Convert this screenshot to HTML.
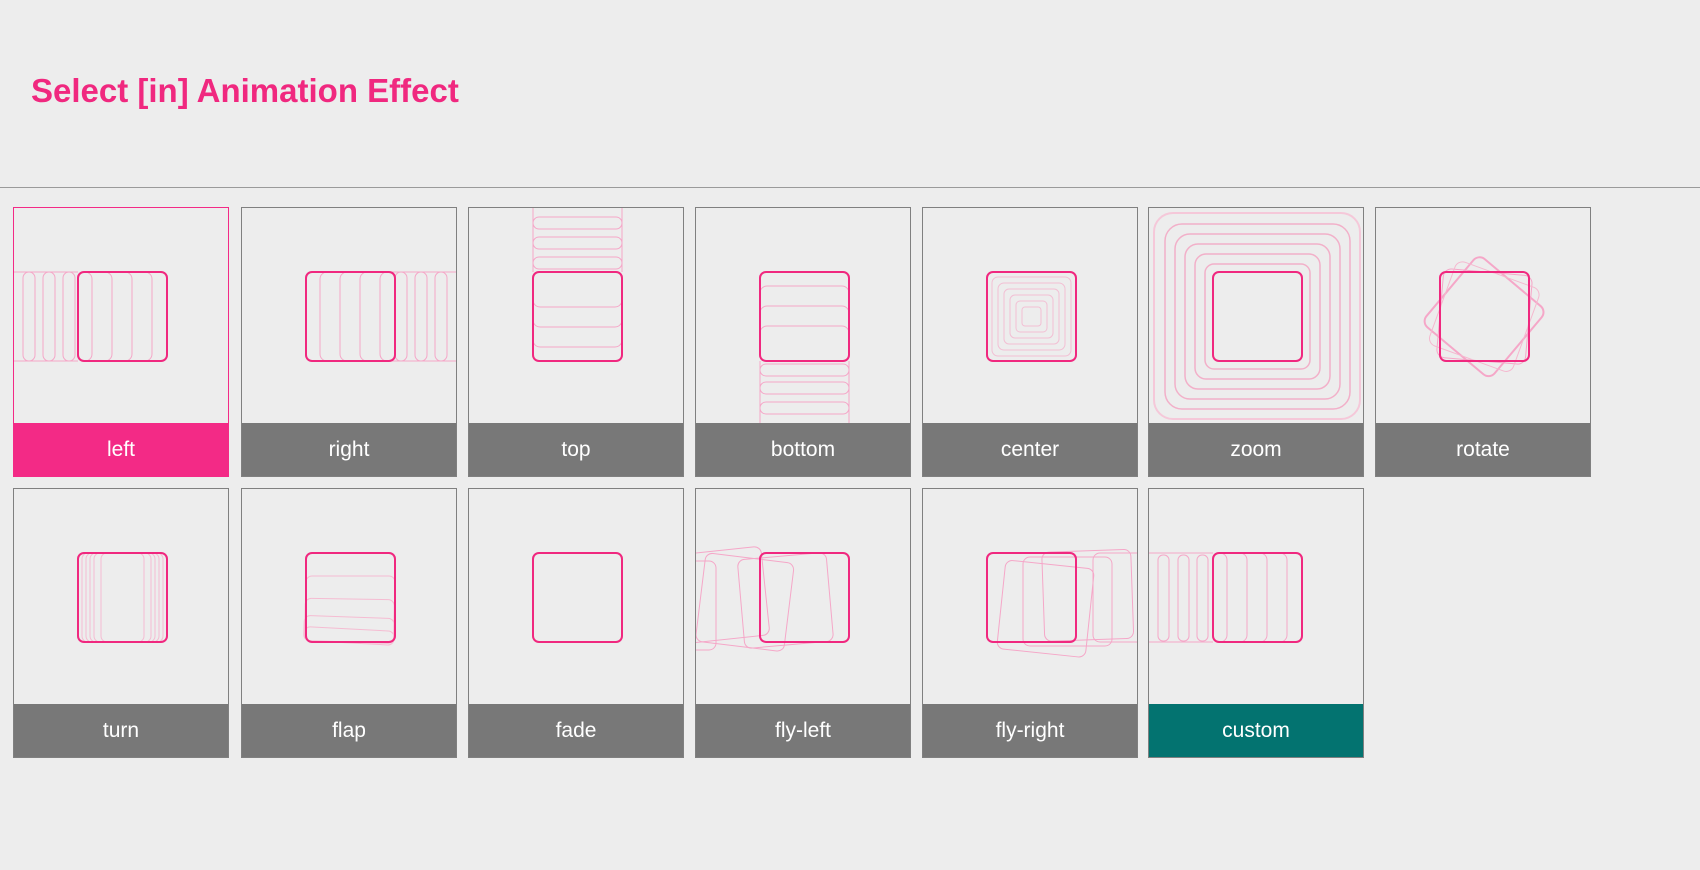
<!DOCTYPE html>
<html><head><meta charset="utf-8"><style>
body{margin:0;width:1700px;height:870px;background:#ededed;font-family:"Liberation Sans",sans-serif;overflow:hidden;position:relative}
h1{position:absolute;left:31px;top:72px;margin:0;font-size:33px;font-weight:bold;color:#f0287f}
.line{position:absolute;left:0;top:187px;width:1700px;height:1px;background:#9a9a9a}
.card{position:absolute;width:214px;height:268px;border:1px solid #808080;background:#ededed;box-sizing:content-box}
.card svg{position:absolute;left:0;top:0}
.lab{position:absolute;left:0;bottom:0;width:100%;height:53px;background:#787878;color:#fff;font-size:21px;text-align:center;line-height:53px}
.sel{border-color:#f32a86}.sel .lab{background:#f32a86}
.cus .lab{background:#037370}
</style></head><body>
<h1>Select [in] Animation Effect</h1>
<div class="line"></div>

<!-- row 1 -->
<div class="card sel" style="left:13px;top:207px"><svg width="214" height="215" viewBox="0 0 214 215" fill="none" stroke="#f5a7c8" stroke-width="1">
<line x1="0" y1="64" x2="64" y2="64"/><line x1="0" y1="153" x2="64" y2="153"/>
<rect x="9" y="64" width="12" height="89" rx="6"/><rect x="29" y="64" width="12" height="89" rx="6"/><rect x="49" y="64" width="12" height="89" rx="6"/>
<rect x="64" y="64" width="14" height="89" rx="7"/><rect x="64" y="64" width="34" height="89" rx="7"/><rect x="64" y="64" width="54" height="89" rx="7"/><rect x="64" y="64" width="74" height="89" rx="7"/>
<rect x="64" y="64" width="89" height="89" rx="6" stroke="#f0287f" stroke-width="2"/></svg><div class="lab">left</div></div>

<div class="card" style="left:241px;top:207px"><svg width="214" height="215" viewBox="0 0 214 215" fill="none" stroke="#f5a7c8">
<line x1="150" y1="64" x2="214" y2="64"/><line x1="150" y1="153" x2="214" y2="153"/>
<rect x="193" y="64" width="12" height="89" rx="6"/><rect x="173" y="64" width="12" height="89" rx="6"/><rect x="153" y="64" width="12" height="89" rx="6"/>
<rect x="138" y="64" width="15" height="89" rx="7"/><rect x="118" y="64" width="35" height="89" rx="7"/><rect x="98" y="64" width="55" height="89" rx="7"/><rect x="78" y="64" width="75" height="89" rx="7"/>
<rect x="64" y="64" width="89" height="89" rx="6" stroke="#f0287f" stroke-width="2"/></svg><div class="lab">right</div></div>

<div class="card" style="left:468px;top:207px"><svg width="214" height="215" viewBox="0 0 214 215" fill="none" stroke="#f5a7c8">
<line x1="64" y1="0" x2="64" y2="64"/><line x1="153" y1="0" x2="153" y2="64"/>
<rect x="64" y="9" width="89" height="12" rx="6"/><rect x="64" y="29" width="89" height="12" rx="6"/><rect x="64" y="49" width="89" height="12" rx="6"/>
<rect x="64" y="64" width="89" height="75" rx="7"/><rect x="64" y="64" width="89" height="55" rx="7"/><rect x="64" y="64" width="89" height="35" rx="7"/>
<rect x="64" y="64" width="89" height="89" rx="6" stroke="#f0287f" stroke-width="2"/></svg><div class="lab">top</div></div>

<div class="card" style="left:695px;top:207px"><svg width="214" height="215" viewBox="0 0 214 215" fill="none" stroke="#f5a7c8">
<line x1="64" y1="153" x2="64" y2="215"/><line x1="153" y1="153" x2="153" y2="215"/>
<rect x="64" y="194" width="89" height="12" rx="6"/><rect x="64" y="174" width="89" height="12" rx="6"/><rect x="64" y="156" width="89" height="12" rx="6"/>
<rect x="64" y="78" width="89" height="75" rx="7"/><rect x="64" y="98" width="89" height="55" rx="7"/><rect x="64" y="118" width="89" height="35" rx="7"/>
<rect x="64" y="64" width="89" height="89" rx="6" stroke="#f0287f" stroke-width="2"/></svg><div class="lab">bottom</div></div>

<div class="card" style="left:922px;top:207px"><svg width="214" height="215" viewBox="0 0 214 215" fill="none" stroke="#f2c0d4">
<rect x="69" y="69" width="79" height="79" rx="6"/><rect x="75" y="75" width="67" height="67" rx="6"/><rect x="81" y="81" width="55" height="55" rx="5"/><rect x="87" y="87" width="43" height="43" rx="5"/><rect x="93" y="93" width="31" height="31" rx="4"/><rect x="99" y="99" width="19" height="19" rx="3"/>
<rect x="64" y="64" width="89" height="89" rx="6" stroke="#f0287f" stroke-width="2"/></svg><div class="lab">center</div></div>

<div class="card" style="left:1148px;top:207px"><svg width="214" height="215" viewBox="0 0 214 215" fill="none" stroke="#f2b0c9" stroke-width="1.5">
<rect x="56" y="56" width="105" height="105" rx="9"/><rect x="46" y="46" width="125" height="125" rx="11"/><rect x="36" y="36" width="145" height="145" rx="13"/><rect x="26" y="26" width="165" height="165" rx="15"/><rect x="16" y="16" width="185" height="185" rx="17"/><rect x="5" y="5" width="206" height="206" rx="19" stroke="#f5c8d9" stroke-width="2"/>
<rect x="64" y="64" width="89" height="89" rx="6" stroke="#f0287f" stroke-width="2"/></svg><div class="lab">zoom</div></div>

<div class="card" style="left:1375px;top:207px"><svg width="214" height="215" viewBox="0 0 214 215" fill="none" stroke="#f07aa8" stroke-width="1">
<g transform="rotate(40 108 108)"><rect x="64" y="64" width="89" height="89" rx="8" stroke="#f5a7c8" stroke-width="2"/></g>
<g transform="rotate(5 108 108)"><rect x="64" y="64" width="89" height="89" rx="8" stroke="#f5a7c8"/></g>
<g transform="rotate(20 108 108)"><rect x="64" y="64" width="89" height="89" rx="8" stroke="#f5b8cf"/></g>
<rect x="64" y="64" width="89" height="89" rx="6" stroke="#f0287f" stroke-width="2"/></svg><div class="lab">rotate</div></div>

<!-- row 2 -->
<div class="card" style="left:13px;top:488px"><svg width="214" height="215" viewBox="0 0 214 215" fill="none" stroke="#f5bcd2">
<rect x="68" y="64" width="81" height="89" rx="6"/><rect x="72" y="64" width="73" height="89" rx="6"/><rect x="76" y="64" width="65" height="89" rx="6"/><rect x="80" y="64" width="57" height="89" rx="6"/><rect x="87" y="64" width="43" height="89" rx="6"/>
<rect x="64" y="64" width="89" height="89" rx="6" stroke="#f0287f" stroke-width="2"/></svg><div class="lab">turn</div></div>

<div class="card" style="left:241px;top:488px"><svg width="214" height="215" viewBox="0 0 214 215" fill="none" stroke="#f5bcd2">
<rect x="64" y="87" width="89" height="66" rx="6"/><rect x="63" y="110" width="89" height="43" rx="6" transform="rotate(1 108 130)"/><rect x="62" y="128" width="90" height="25" rx="6" transform="rotate(2 108 140)"/><rect x="62" y="140" width="90" height="14" rx="6" transform="rotate(3 108 147)"/>
<rect x="64" y="64" width="89" height="89" rx="6" stroke="#f0287f" stroke-width="2"/></svg><div class="lab">flap</div></div>

<div class="card" style="left:468px;top:488px"><svg width="214" height="215" viewBox="0 0 214 215" fill="none">
<rect x="64" y="64" width="89" height="89" rx="6" stroke="#f0287f" stroke-width="2"/></svg><div class="lab">fade</div></div>

<div class="card" style="left:695px;top:488px"><svg width="214" height="215" viewBox="0 0 214 215" fill="none" stroke="#f5a7c8">
<g transform="rotate(-5 100 100)"><rect x="44" y="66" width="89" height="89" rx="7"/></g>
<g transform="rotate(7 60 100)"><rect x="6" y="70" width="89" height="89" rx="7"/></g>
<g transform="rotate(-6 40 100)"><rect x="-20" y="60" width="89" height="89" rx="7"/></g>
<rect x="-30" y="72" width="50" height="89" rx="7"/>
<rect x="64" y="64" width="89" height="89" rx="6" stroke="#f0287f" stroke-width="2"/></svg><div class="lab">fly-left</div></div>

<div class="card" style="left:922px;top:488px"><svg width="214" height="215" viewBox="0 0 214 215" fill="none" stroke="#f5a7c8">
<g transform="rotate(6 120 120)"><rect x="78" y="75" width="89" height="89" rx="7"/></g>
<rect x="100" y="68" width="89" height="89" rx="7"/>
<g transform="rotate(-2 160 100)"><rect x="120" y="62" width="89" height="89" rx="7"/></g>
<rect x="170" y="64" width="60" height="89" rx="7"/>
<rect x="64" y="64" width="89" height="89" rx="6" stroke="#f0287f" stroke-width="2"/></svg><div class="lab">fly-right</div></div>

<div class="card cus" style="left:1148px;top:488px"><svg width="214" height="215" viewBox="0 0 214 215" fill="none" stroke="#f5a7c8">
<line x1="0" y1="64" x2="64" y2="64"/><line x1="0" y1="153" x2="64" y2="153"/>
<rect x="9" y="66" width="11" height="86" rx="5"/><rect x="29" y="66" width="11" height="86" rx="5"/><rect x="48" y="66" width="11" height="86" rx="5"/>
<rect x="64" y="64" width="14" height="89" rx="7"/><rect x="64" y="64" width="34" height="89" rx="7"/><rect x="64" y="64" width="54" height="89" rx="7"/><rect x="64" y="64" width="74" height="89" rx="7"/>
<rect x="64" y="64" width="89" height="89" rx="6" stroke="#f0287f" stroke-width="2"/></svg><div class="lab">custom</div></div>
</body></html>
